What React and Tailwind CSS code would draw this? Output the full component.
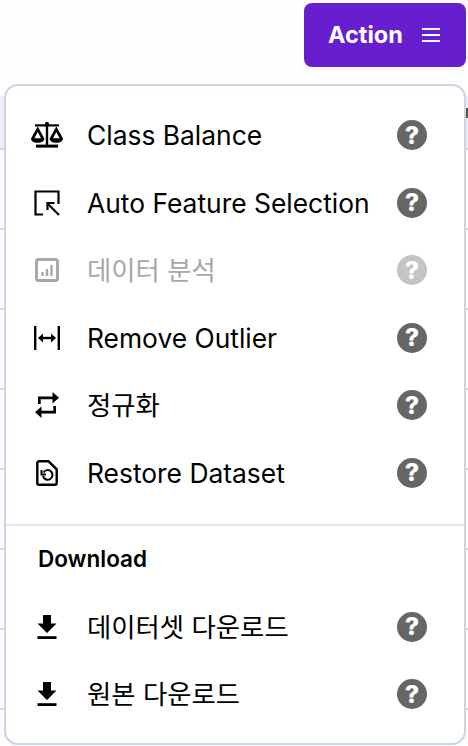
import React from 'react';

const font = "font-['Inter','Noto_Sans_CJK_KR',sans-serif]";

function HelpIcon({ faded }) {
  return (
    <span className={`flex h-[30px] w-[30px] shrink-0 items-center justify-center rounded-full text-[25px] font-extrabold leading-none text-white ${faded ? 'bg-[#c4c4c4]' : 'bg-[#666666]'}`}>
      ?
    </span>
  );
}

const icons = {
  scale: (
    <svg viewBox="0 0 32 26" className="h-[26px] w-[32px]" fill="currentColor">
      <rect x="14.8" y="0" width="2.4" height="23" />
      <circle cx="16" cy="2.5" r="2.2" />
      <rect x="4" y="2.3" width="24" height="2.2" />
      <rect x="5" y="22.6" width="22" height="3" />
      <path d="M0 16.500 6.700 4.500l6.700 12c0 2.800-3 4.300-6.700 4.300S0 19.300 0 16.500Zm3.400-.3h6.600L6.700 9.900Z" fillRule="evenodd" />
      <path d="M18.600 16.500 25.300 4.500l6.700 12c0 2.800-3 4.300-6.700 4.300s-6.700-1.500-6.700-4.300Zm3.400-.3h6.600l-3.300-6.300Z" fillRule="evenodd" />
    </svg>
  ),
  select: (
    <svg viewBox="0 0 26 26" className="h-[26px] w-[26px]" fill="none" stroke="currentColor" strokeWidth="2.200">
      <path d="M9 24.500H1.500V1.500h23V14" />
      <path d="M25 25 13 13" />
      <path d="M13.500 20v-7h7" />
    </svg>
  ),
  chart: (
    <svg viewBox="0 0 24 24" className="h-[24px] w-[24px]" fill="none" stroke="currentColor">
      <rect x="1.500" y="1.500" width="21" height="21" rx="2" strokeWidth="3" />
      <path d="M7.500 14v4M12 11v7M16.500 7v11" strokeWidth="2.400" />
    </svg>
  ),
  outlier: (
    <svg viewBox="0 0 26 24" className="h-[24px] w-[26px]" fill="currentColor">
      <rect x="0" y="0" width="2.400" height="24" />
      <rect x="23.600" y="0" width="2.400" height="24" />
      <rect x="6" y="10.800" width="14" height="2.400" />
      <path d="M9 7.500v9L4 12ZM17 7.500v9l5-4.500Z" />
    </svg>
  ),
  swap: (
    <svg viewBox="0 0 24 26" className="h-[26px] w-[24px]" fill="currentColor">
      <path d="M3 12V4.500h14.500V0L24 5.800l-6.500 5.700V7.200H5.700V12Z" />
      <path d="M21 14v7.500H6.500V26L0 20.200l6.500-5.700v4.300h11.800V14Z" />
    </svg>
  ),
  restore: (
    <svg viewBox="0 0 22 26" className="h-[26px] w-[22px]" fill="none" stroke="currentColor" strokeWidth="2.400">
      <path d="M3 1.300h9.500l8.200 8V23a1.700 1.700 0 0 1-1.700 1.700H3A1.700 1.700 0 0 1 1.300 23V3A1.700 1.700 0 0 1 3 1.300Z" />
      <path d="M7.500 12.500a4.800 4.800 0 1 1-.5 3.500" strokeWidth="2" />
      <path d="M5.500 10v4.500H10" strokeWidth="2" />
    </svg>
  ),
  download: (
    <svg viewBox="0 0 20 24" className="h-[24px] w-[20px]" fill="currentColor">
      <path d="M6 0h8v8.500h5.500L10 18 .5 8.500H6Z" />
      <rect x="0.500" y="21.200" width="19" height="2.800" />
    </svg>
  ),
};

const mainItems = [
  { icon: 'scale', label: 'Class Balance' },
  { icon: 'select', label: 'Auto Feature Selection' },
  { icon: 'chart', label: '데이터 분석', disabled: true },
  { icon: 'outlier', label: 'Remove Outlier' },
  { icon: 'swap', label: '정규화' },
  { icon: 'restore', label: 'Restore Dataset' },
];

const downloadItems = [
  { icon: 'download', label: '데이터셋 다운로드' },
  { icon: 'download', label: '원본 다운로드' },
];

function MenuItem({ item }) {
  return (
    <div className={`flex h-[67.5px] items-center pl-[25px] pr-[37px] ${item.disabled ? 'text-[#a8a8a8]' : 'text-black'}`}>
      <span className="flex w-[32px] shrink-0 justify-center">{icons[item.icon]}</span>
      <span className="ml-[24px] flex-1 text-[26.4px] leading-none">{item.label}</span>
      <HelpIcon faded={item.disabled} />
    </div>
  );
}

export default function App() {
  return (
    <div className={`relative h-[746px] w-[468px] overflow-hidden bg-[#fdfcff] ${font}`}>
      {/* table behind the menu, only the edges show */}
      <div className="pt-[96px]">
        <div className="flex h-[52px] justify-end bg-[#eeeef8] pt-[12px]">
          <div className="h-[10px] w-[2px] bg-[#555555]" />
        </div>
        {[0, 1, 2, 3, 4, 5, 6, 7].map(i => (
          <div key={i} className="h-[80px] border-t-2 border-[#d6d6dc]" />
        ))}
      </div>

      <button className="absolute right-[2px] top-[3px] flex h-[64px] w-[162px] items-center gap-[19px] rounded-[8px] bg-[#661ecf] pl-[24px] text-[23.500px] font-bold text-white">
        Action
        <span className="flex w-[18px] flex-col gap-[4px]">
          <span className="h-[2px] bg-white" />
          <span className="h-[2px] bg-white" />
          <span className="h-[2px] bg-white" />
        </span>
      </button>

      <div className="absolute left-[4px] top-[84px] h-[661px] w-[462px] rounded-[14px] border-2 border-[#cbd5e1] bg-white pt-[15.500px]">
        {mainItems.map(item => <MenuItem key={item.label} item={item} />)}
        <div className="mt-[17.500px] h-[2px] bg-[#e2e8f0]" />
        <div className="pl-[32px] pt-[19px] text-[22.500px] font-semibold leading-[28px] text-black">Download</div>
        <div className="pt-[20px]">
          {downloadItems.map(item => <MenuItem key={item.label} item={item} />)}
        </div>
      </div>
    </div>
  );
}
